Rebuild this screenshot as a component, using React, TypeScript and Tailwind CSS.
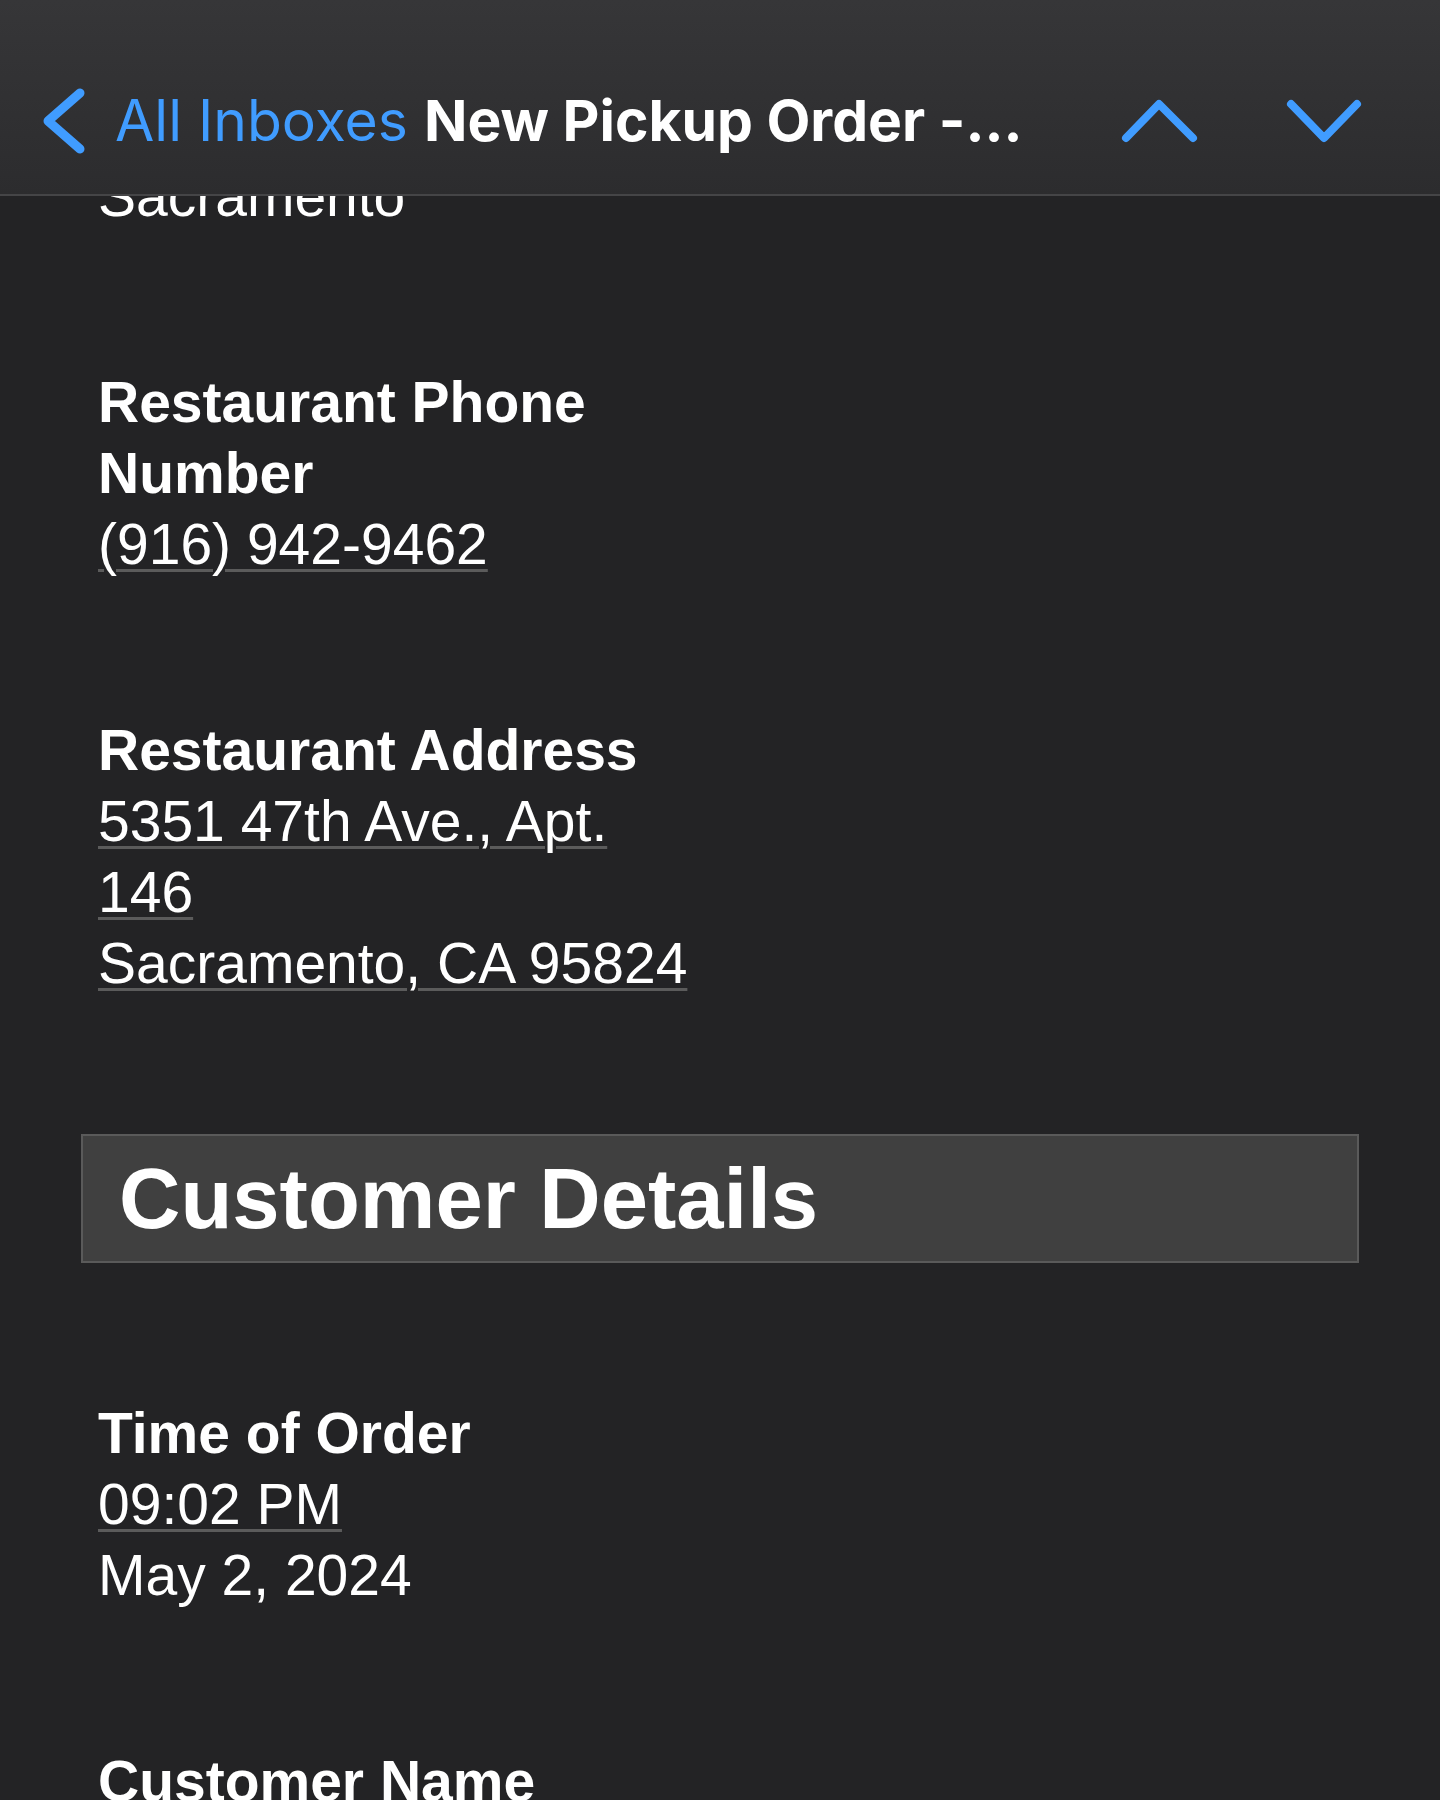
import React from "react";

const link = "underline decoration-[#5b5b5b] decoration-[3px] underline-offset-[5px]";

function Chevron({ d, w, h, sw }: { d: string; w: number; h: number; sw: number }) {
  return (
    <svg width={w} height={h} viewBox={`0 0 ${w} ${h}`} fill="none">
      <path d={d} stroke="#409cff" strokeWidth={sw} strokeLinecap="round" strokeLinejoin="round" />
    </svg>
  );
}

function Field({ label, children }: { label: React.ReactNode; children: React.ReactNode }) {
  return (
    <div className="pl-[17px] text-[57px] leading-[71px] text-white">
      <div className="font-bold">{label}</div>
      {children}
    </div>
  );
}

export default function App() {
  return (
    <div className="h-[1800px] overflow-hidden bg-[#232325] font-['Liberation_Sans',Arial,sans-serif] flex flex-col">
      {/* nav bar */}
      <div className="relative z-10 h-[196px] shrink-0 bg-linear-to-b from-[#363638] to-[#2c2c2e] border-b-2 border-[#454547] pt-[48px] flex items-center justify-between">
        <div className="flex items-center pl-[41px]">
          <Chevron d="M39 7 L7 35 L39 63" w={46} h={70} sw={9} />
          <div className="ml-[28px] font-['Inter',sans-serif] text-[57px] whitespace-nowrap">
            <span className="text-[#409cff]">All Inboxes</span>{" "}
            <span className="text-white font-bold">New Pickup Order -...</span>
          </div>
        </div>
        <div className="flex items-center gap-[85px] pr-[77px]">
          <Chevron d="M8 42 L41 8 L75 42" w={80} h={50} sw={8} />
          <Chevron d="M8 8 L41 42 L74 8" w={80} h={50} sw={8} />
        </div>
      </div>

      {/* message body */}
      <div className="flex-1 overflow-hidden">
        <div className="-mt-[35px] pl-[81px] pr-[81px] flex flex-col gap-[135px]">
          <div className="pl-[17px] text-[57px] leading-[71px] text-white">Sacramento</div>

          <Field label={<>Restaurant Phone<br />Number</>}>
            <div>
              <span className={link}>(916) 942-9462</span>
            </div>
          </Field>

          <Field label="Restaurant Address">
            <div>
              <span className={link}>5351 47th Ave., Apt.</span>
            </div>
            <div>
              <span className={link}>146</span>
            </div>
            <div>
              <span className={link}>Sacramento, CA 95824</span>
            </div>
          </Field>

          <div className="h-[129px] border-2 border-[#5a5a5a] bg-[#404040] flex items-center pl-[36px]">
            <h2 className="text-[85px] font-bold text-white leading-none">Customer Details</h2>
          </div>

          <Field label="Time of Order">
            <div>
              <span className={link}>09:02 PM</span>
            </div>
            <div>May 2, 2024</div>
          </Field>

          <Field label="Customer Name">
            <div>&nbsp;</div>
          </Field>
        </div>
      </div>
    </div>
  );
}
